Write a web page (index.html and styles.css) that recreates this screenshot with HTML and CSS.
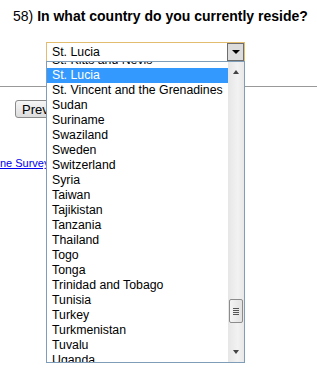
FILE: index.html
```html
<!DOCTYPE html>
<html lang="en">
<head>
    <meta charset="UTF-8">
    <title>Survey - Question 58</title>
    <link rel="stylesheet" href="styles.css">
</head>
<body>
    <div class="question">
        <span class="num">58)</span> <b>In what country do you currently reside?</b>
    </div>

    <div class="field">
        <div class="select">
            <span class="value">St. Lucia</span>
            <span class="dropBtn"><span class="arrowDown"></span></span>
        </div>

        <div class="list">
            <ul class="options">
                <li class="cut">St. Kitts and Nevis</li>
                <li class="selected">St. Lucia</li>
                <li>St. Vincent and the Grenadines</li>
                <li>Sudan</li>
                <li>Suriname</li>
                <li>Swaziland</li>
                <li>Sweden</li>
                <li>Switzerland</li>
                <li>Syria</li>
                <li>Taiwan</li>
                <li>Tajikistan</li>
                <li>Tanzania</li>
                <li>Thailand</li>
                <li>Togo</li>
                <li>Tonga</li>
                <li>Trinidad and Tobago</li>
                <li>Tunisia</li>
                <li>Turkey</li>
                <li>Turkmenistan</li>
                <li>Tuvalu</li>
                <li>Uganda</li>
            </ul>
            <div class="scrollbar">
                <span class="arrowUp small"></span>
                <span class="thumb"><i></i><i></i><i></i><i></i></span>
                <span class="arrowDown small"></span>
            </div>
        </div>
    </div>

    <hr class="rule">

    <div class="nav">
        <button class="prev">Previous</button>
    </div>

    <p class="exit"><a href="#">Exit Online Survey</a></p>
</body>
</html>
```

FILE: styles.css
```css
html, body {
    height: 100%;
    overflow: hidden;
}

body {
    margin: 0;
    min-height: 383px;
    font-family: 'Liberation Sans', Arial, sans-serif;
    font-size: 14px;
    color: #000;
    background: #fff;
}

.question {
    padding: 8px 0 0 13px;
    line-height: 17px;
    white-space: nowrap;
}

.question .num {
    font-weight: normal;
}

.field {
    position: relative;
    margin: 17px 0 0 46px;
    width: 199px;
}

.select {
    box-sizing: border-box;
    height: 20px;
    border: 1px solid #e3bd6f;
    display: flex;
    align-items: center;
    justify-content: space-between;
    font-size: 12.3px;
}

.select .value {
    padding-left: 5px;
}

.dropBtn {
    box-sizing: border-box;
    width: 17px;
    height: 18px;
    background: #dcdcdc;
    border: 1px solid #6d6d6d;
    display: flex;
    align-items: center;
    justify-content: center;
}

.arrowDown {
    width: 0;
    height: 0;
    border-left: 4px solid transparent;
    border-right: 4px solid transparent;
    border-top: 4px solid #000;
}

.arrowUp {
    width: 0;
    height: 0;
    border-left: 4px solid transparent;
    border-right: 4px solid transparent;
    border-bottom: 4px solid #000;
}

.small {
    border-left-width: 3px;
    border-right-width: 3px;
    border-top-color: #444;
    border-bottom-color: #444;
}

/* the open dropdown sits over the page */
.list {
    position: absolute;
    left: 0;
    top: 19px;
    box-sizing: border-box;
    width: 199px;
    height: 302px;
    border: 1px solid #7f9db9;
    background: #fff;
    display: flex;
    overflow: hidden;
    z-index: 5;
}

.options {
    list-style: none;
    margin: 0;
    padding: 0;
    flex: 1;
    font-size: 12.3px;
    line-height: 15px;
    margin-top: -9px;
}

.options li {
    padding-left: 5px;
    height: 15px;
    white-space: nowrap;
}

.options li.selected {
    background: #3399ff;
    color: #fff;
}

.scrollbar {
    width: 16px;
    background: linear-gradient(to right, #e6e6e6, #f2f2f2 60%, #e8e8e8);
    display: flex;
    flex-direction: column;
    align-items: center;
    padding: 8px 0 8px;
    box-sizing: border-box;
}

.scrollbar .thumb {
    box-sizing: border-box;
    margin-top: auto;
    margin-bottom: 27px;
    width: 14px;
    height: 24px;
    border: 1px solid #8c8c8c;
    border-radius: 2px;
    background: linear-gradient(to right, #f4f4f4, #e2e2e2);
    display: flex;
    flex-direction: column;
    align-items: center;
    justify-content: center;
    gap: 1px;
}

.scrollbar .thumb i {
    display: block;
    width: 6px;
    height: 1px;
    background: #555;
}

.rule {
    margin: 24px 0 0;
    border: 0;
    border-top: 1px solid #999;
}

.nav {
    padding: 13px 0 0 15px;
}

.prev {
    font-family: 'Liberation Sans', Arial, sans-serif;
    font-size: 13px;
    height: 18px;
    padding: 0 6px;
    border: 1px solid #8a8a8a;
    border-radius: 3px;
    background: linear-gradient(#f6f6f6, #dcdcdc);
    width: 90px;
    text-align: left;
}

.exit {
    margin: 39px 0 0 -41px;
    font-size: 11px;
    line-height: 13px;
    white-space: nowrap;
}

.exit a {
    color: #0000ee;
}
```
